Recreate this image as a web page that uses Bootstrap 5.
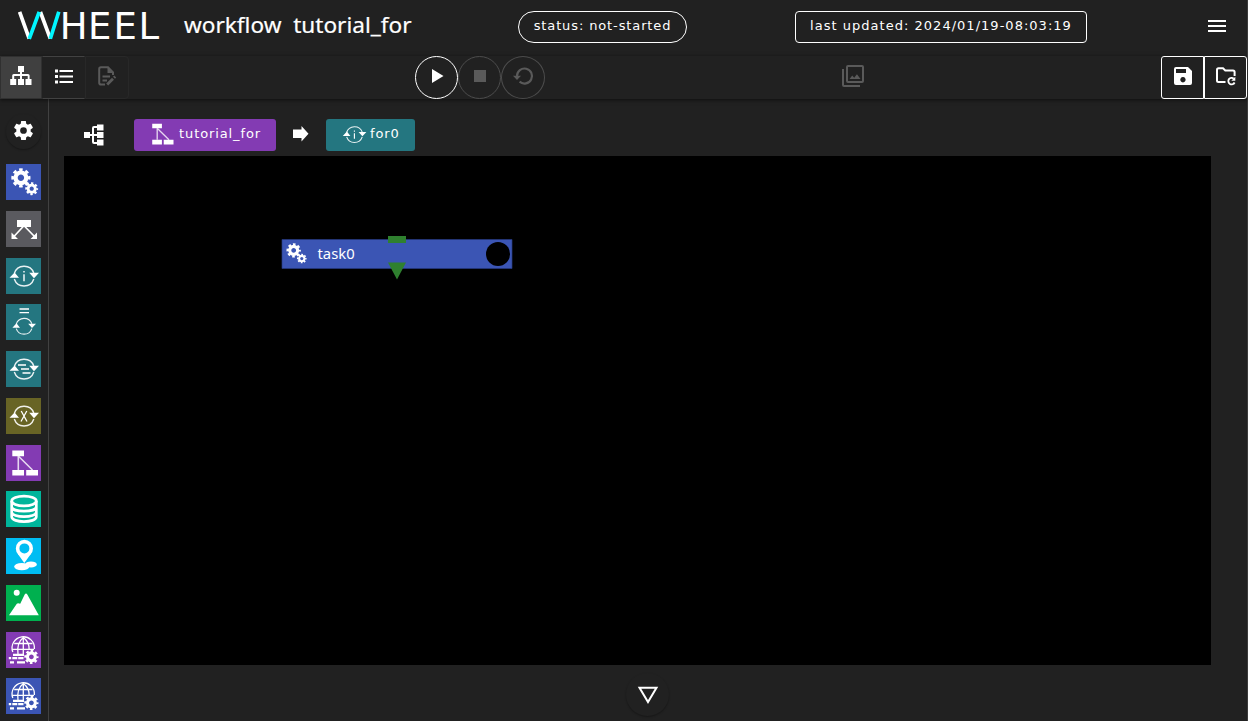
<!DOCTYPE html>
<html lang="en" data-bs-theme="dark">
<head>
<meta charset="utf-8">
<meta name="viewport" content="width=device-width, initial-scale=1">
<title>WHEEL workflow</title>
<link rel="stylesheet" href="https://cdn.jsdelivr.net/npm/bootstrap@5.3.0/dist/css/bootstrap.min.css">
<style>
body{background:#212121;color:#fff;font-family:"DejaVu Sans",sans-serif;font-size:13px;height:721px;overflow:hidden}
svg{display:block;flex:none;overflow:visible}
.app{height:721px;border-right:1px solid #3b3b3b}
.topbar{height:56px;padding-left:14px}
.title{font:22.6px/30px "Noto Sans",sans-serif;color:#fff;white-space:pre;margin:-6px 0 0 20px;width:227px;-webkit-text-stroke:.2px #fff}
.pill{height:32px;border:1px solid #fff;font-size:13px;line-height:28px;white-space:nowrap;text-align:center;margin-top:-2px}
.status{width:169px;border-radius:16px;margin-left:107px;letter-spacing:.88px}
.updated{width:292px;border-radius:4px;margin-left:108px;letter-spacing:1.02px}
.toolbar{height:43px;box-shadow:0 1px 4px #0009;position:relative}
.tool{height:43px;width:43px;border:1px solid #303030;padding:0;color:#fff;display:flex;align-items:center;justify-content:center;background:none;padding-bottom:3px}
.round-btn{border-radius:50%;border-color:#fff}
.dim{color:#5a5a5a;border-color:#4c4c4c}
.side{width:49px;border-right:1px solid #414141;padding:15px 0 0 6px}
.tile{width:35px;height:36px;margin-bottom:10.75px}
.gearbtn{width:35px;height:35px;border-radius:50%;margin-bottom:15px;box-shadow:0 1px 2px #0005;padding-bottom:3px}
.crumb{height:32px;border-radius:3px;font-size:13px;line-height:29px;color:#fff;letter-spacing:.9px}
.canvas{width:1147px;height:509px;background:#000;position:relative;margin-left:15px}
.node{position:absolute;left:217px;top:79px}
.down{width:43px;height:43px;border-radius:50%;box-shadow:0 1px 2px #0005;margin:8px 0 0 577px}
</style>
</head>
<body>
<svg width="0" height="0" class="position-absolute">
<defs>
<g id="gear"><circle r="5.3" fill="none" stroke="#fff" stroke-width="4.2"/><circle r="8" fill="none" stroke="#fff" stroke-width="3.2" pathLength="16" stroke-dasharray="1.1 .9" stroke-dashoffset=".55"/></g>
<g id="gears"><use href="#gear" transform="translate(14.9 13.8)"/><use href="#gear" transform="translate(25.7 24.7) scale(.67)"/></g>
<g id="loop"><path d="M8.3 15.5A10.3 10.3 0 0 1 27.8 15M8.3 21A10.3 10.3 0 0 0 27.8 21" fill="none" stroke="#fff" stroke-width="1.4" stroke-opacity=".9"/><path d="M3.5 19.8L8.6 14.4L13 19.8ZM23.2 14.8H33L28 20.2Z" fill="#fff"/></g>
<g id="info"><use href="#loop"/><path d="M18 13V14.6M18 16.3V23.2" stroke="#fff" stroke-width="1.4"/></g>
<g id="flow" fill="#fff"><path d="M6.3 5.6H18V11.2H6.3ZM6.3 25H18V30.6H6.3ZM20.2 25H32V30.6H20.2Z"/><path d="M12.3 11V25M12.3 11L26.5 25" stroke="#fff" stroke-width="1.6" opacity=".8"/></g>
<g id="globe"><g fill="none" stroke="#fff" stroke-width="1.3"><path d="M6.8 20A11.2 11.2 0 1 1 28.4 17"/><path d="M12 22Q10.5 11 17.3 5.5Q23.5 10 23.2 18M17.3 5.5V23M8.2 11.5H26.5M6.2 17.3H28"/></g><g stroke="#fff" stroke-width="2.2"><path d="M7 22.8H18M2.8 26.2H5.2M6.3 26.2H11.3M12.2 26.2H17.5M4 30.3H8M11 30.3H19"/></g><use href="#gear" transform="translate(25.4 24.8) scale(.74)"/></g>
</defs>
</svg>
<div class="app d-flex flex-column">
<header class="topbar d-flex align-items-center flex-shrink-0">
<svg width="150" height="56" viewBox="14 0 150 56"><g fill="none" stroke-width="3.7"><path d="M19.6 11.8L29.2 38.6M40.4 12L50.3 38.6" stroke="#fff"/><path d="M29.2 38.8L39.2 11.8M50.3 38.8L58.8 11.8" stroke="#00f6ff"/></g><text y="38.8" x="59.8 88 113.6 138.6" font-family="DejaVu Sans" font-size="37" fill="#fff">HEEL</text></svg>
<div class="title">workflow  tutorial_for</div>
<div class="pill status">status: not-started</div>
<div class="pill updated">last updated: 2024/01/19-08:03:19</div>
<svg width="18" height="12" viewBox="0 0 18 12" style="margin:-4px 0 0 121px"><path d="M0 1H18M0 6H18M0 11H18" stroke="#fff" stroke-width="2"/></svg>
</header>
<div class="toolbar d-flex flex-shrink-0">
<button class="tool" style="background:#404040;width:42px"><svg width="22" height="20" viewBox="0 0 22 20"><path d="M8 0H14V6H12V8H18Q19.6 8 19.6 9.6V13H21.5V19H15.5V13H17.7V10H12V13H14V19H8V13H10V10H4.2V13H6.2V19H.2V13H2.2V9.6Q2.2 8 3.8 8H10V6H8Z" fill="#fff"/></svg></button>
<button class="tool" style="border-color:#424242 transparent"><svg width="18" height="15" viewBox="0 0 18 15"><path d="M4.5 2H18M4.5 7.5H18M4.5 13H18" stroke="#fff" stroke-width="2.1"/><path d="M0 2H3M0 7.5H3M0 13H3" stroke="#fff" stroke-width="3"/></svg></button>
<button class="tool dim" style="border-color:#282828;border-radius:0 4px 4px 0;width:44px"><svg width="18" height="20" viewBox="0 0 18 20" fill="none" stroke="#5a5a5a" stroke-width="2"><path d="M7 18.5H3Q1.2 18.5 1.2 16.7V3Q1.2 1.2 3 1.2H10L15 6.5V9"/><path d="M9.5 1L15.5 7H9.5Z" fill="#5a5a5a" stroke="none"/><path d="M4.5 10.5H12M4.5 14.5H9"/><path d="M9.2 18.5L15 12.8M16 11.8L17.2 10.6" stroke-width="2.8"/></svg></button>
<div class="d-flex" style="margin-left:286px">
<button class="tool round-btn"><svg width="12" height="14" viewBox="0 0 12 14" style="margin-left:2px"><path d="M0 0L11.5 7L0 14Z" fill="#fff"/></svg></button>
<button class="tool round-btn dim"><svg width="12" height="12"><path d="M0 0H12V12H0Z" fill="#5a5a5a"/></svg></button>
<button class="tool round-btn dim" style="width:44px"><svg width="20" height="18" viewBox="0 0 20 18"><path d="M4 9A7.5 7.5 0 1 1 6.6 14.7" fill="none" stroke="#5a5a5a" stroke-width="2.2"/><path d="M0 8.7H8L4 13Z" fill="#5a5a5a"/></svg></button>
</div>
<svg width="24" height="24" viewBox="0 0 24 24" style="margin:8px 0 0 296px"><path fill="#5a5a5a" d="M21 17H7V3H21M21 1H7A2 2 0 0 0 5 3V17A2 2 0 0 0 7 19H21A2 2 0 0 0 23 17V3A2 2 0 0 0 21 1M3 5H1V21A2 2 0 0 0 3 23H19V21H3M15.96 10.29L13.21 13.83L11.25 11.47L8.5 15H19.5Z"/></svg>
<div class="d-flex ms-auto">
<button class="tool" style="border-color:#fff;border-radius:3px 0 0 3px"><svg width="18" height="18" viewBox="3 3 18 18"><path fill="#fff" fill-rule="evenodd" d="M17 3H5A2 2 0 0 0 3 5V19A2 2 0 0 0 5 21H19A2 2 0 0 0 21 19V7ZM5 5H15V9H5ZM12 13A2.7 2.7 0 1 1 11.9 13Z"/></svg></button>
<button class="tool" style="border-color:#fff;border-radius:0 3px 3px 0"><svg width="20" height="19" viewBox="0 0 20 19" fill="none" stroke="#fff" stroke-width="2"><path d="M9.5 15H2.5Q1 15 1 13.5V3Q1 1.3 2.5 1.3H7L9.3 3.5H17Q18.6 3.5 18.6 5V9"/><path d="M18.6 15.5A3.3 3.3 0 1 1 17.8 11.6" stroke-width="1.8"/><path d="M19.3 9.8V13.8H15.3Z" fill="#fff" stroke="none"/></svg></button>
</div>
</div>
<div class="d-flex flex-grow-1">
<aside class="side flex-shrink-0">
<div class="gearbtn d-flex align-items-center justify-content-center"><svg width="23" height="23" viewBox="0 0 24 24"><path fill="#fff" d="M12,15.5A3.5,3.5 0 0,1 8.5,12A3.5,3.5 0 0,1 12,8.5A3.5,3.5 0 0,1 15.5,12A3.5,3.5 0 0,1 12,15.5M19.43,12.97C19.47,12.65 19.5,12.33 19.5,12C19.5,11.67 19.47,11.34 19.43,11L21.54,9.37C21.73,9.22 21.78,8.95 21.66,8.73L19.66,5.27C19.54,5.05 19.27,4.96 19.05,5.05L16.56,6.05C16.04,5.66 15.5,5.32 14.87,5.07L14.5,2.42C14.46,2.18 14.25,2 14,2H10C9.75,2 9.54,2.18 9.5,2.42L9.13,5.07C8.5,5.32 7.96,5.66 7.44,6.05L4.95,5.05C4.73,4.96 4.46,5.05 4.34,5.27L2.34,8.73C2.21,8.95 2.27,9.22 2.46,9.37L4.57,11C4.53,11.34 4.5,11.67 4.5,12C4.5,12.33 4.53,12.65 4.57,12.97L2.46,14.63C2.27,14.78 2.21,15.05 2.34,15.27L4.34,18.73C4.46,18.95 4.73,19.03 4.95,18.95L7.44,17.94C7.96,18.34 8.5,18.68 9.13,18.93L9.5,21.58C9.54,21.82 9.75,22 10,22H14C14.25,22 14.46,21.82 14.5,21.58L14.87,18.93C15.5,18.67 16.04,18.34 16.56,17.94L19.05,18.95C19.27,19.03 19.54,18.95 19.66,18.73L21.66,15.27C21.78,15.05 21.73,14.78 21.54,14.63L19.43,12.97Z"/></svg></div>
<svg class="tile" style="background:#3b55b4" viewBox="0 0 35 36"><use href="#gears"/></svg>
<svg class="tile" style="background:#5a5a5f" viewBox="0 0 35 36"><path d="M11 9H25V16H11ZM5.5 28V21.5L12 28ZM31 28V21.5L24.5 28Z" fill="#fff"/><path d="M17.7 15L7 26.5M18.3 15L29.5 26.5" stroke="#fff" stroke-width="1.7"/></svg>
<svg class="tile" style="background:#247680" viewBox="0 0 35 36"><use href="#info"/></svg>
<svg class="tile" style="background:#247680" viewBox="0 0 35 36"><path d="M13.5 5H23M13.5 8.6H23" stroke="#fff" stroke-width="1.4"/><use href="#loop" transform="translate(3.6 7.8) scale(.8)"/></svg>
<svg class="tile" style="background:#247680" viewBox="0 0 35 36"><use href="#loop"/><path d="M12 14H20M15 18H23M16.5 22H24.5" stroke="#fff" stroke-width="1.5"/></svg>
<svg class="tile" style="background:#686425" viewBox="0 0 35 36"><use href="#loop"/><path d="M15.2 13L21 23.5M20.8 13L15 23.5" stroke="#fff" stroke-width="1.3"/></svg>
<svg class="tile" style="background:#833bb3" viewBox="0 0 35 36"><use href="#flow"/></svg>
<svg class="tile" style="background:#00b59b" viewBox="0 0 35 36"><g fill="none" stroke="#fff" stroke-width="2.7"><ellipse cx="18" cy="10" rx="12.3" ry="4.8"/><path d="M5.7 10V25.7C5.7 32.2 30.3 32.2 30.3 25.7V10M5.7 15.7C5.7 21.7 30.3 21.7 30.3 15.7M5.7 21C5.7 27.2 30.3 27.2 30.3 21"/></g></svg>
<svg class="tile" style="background:#00bdf3" viewBox="0 0 35 36"><ellipse cx="15.8" cy="28.6" rx="7.6" ry="3.6" fill="#fff"/><ellipse cx="25" cy="26.4" rx="5.8" ry="3" fill="#fff"/><path d="M18.3 25L11.5 15.5H25.2Z" fill="#fff"/><circle cx="18.4" cy="10.4" r="6.8" fill="#00bdf3" stroke="#fff" stroke-width="3.6"/></svg>
<svg class="tile" style="background:#00b04f" viewBox="0 0 35 36"><circle cx="10.7" cy="7.8" r="3" fill="#fff"/><path d="M3 30.3L10.8 18.7Q11.8 17.7 14.2 18.7L18.7 9.5Q20 7.5 21.3 9.5L32.8 30.3Z" fill="#fff"/></svg>
<svg class="tile" style="background:#833bb3" viewBox="0 0 35 36"><use href="#globe"/></svg>
<svg class="tile mb-0" style="background:#3b55b4" viewBox="0 0 35 36"><use href="#globe"/></svg>
</aside>
<main class="flex-grow-1">
<div class="d-flex align-items-center" style="height:32px;margin:20px 0 5px 35px">
<svg width="20" height="22" viewBox="0 0 20 22"><path fill="#fff" d="M0 8H6V10H8V4Q8 2 10 2H13V.5H19.5V6.5H13V4H10V10H13V8H19.5V14H13V12H10V18H13V15.5H19.5V21.5H13V20H10Q8 20 8 18V12H6V14H0Z"/></svg>
<div class="crumb d-flex" style="background:#833bb3;width:142px;margin-left:30px;padding-left:13px"><svg width="29" height="30" viewBox="0 0 35 36" style="margin:0 3px 0 0"><use href="#flow"/></svg>tutorial_for</div>
<svg width="16" height="16" viewBox="0 0 16 16" style="margin:-2px 0 0 17px"><path d="M0 3.5H8.5V0L15.5 7.8L8.5 15.5V12H0Z" fill="#fff"/></svg>
<div class="crumb d-flex" style="background:#247680;width:89px;margin-left:17px;padding-left:14px"><svg width="28" height="29" viewBox="0 0 35 36" style="margin:1px 2px 0 0"><use href="#info"/></svg>for0</div>
</div>
<div class="canvas">
<svg class="node" width="232" height="46" viewBox="281 235 232 46"><path d="M282 239.5H512V268.5H282Z" fill="#3b55b4" stroke="#263a80" stroke-width=".7"/><path d="M388 236H406V243H388ZM388 262.5H406L397 279.5Z" fill="#2f802f"/><use href="#gears" transform="translate(282.5 240) scale(.75)"/><circle cx="498" cy="254" r="12"/><text x="317.5" y="259" font-family="Noto Sans" font-size="14.8" fill="#fff">task0</text></svg>
</div>
<div class="down d-flex justify-content-center"><svg width="22" height="19" viewBox="0 0 22 19" style="margin-top:13px"><path d="M2.5 1.7H19.5L11 16Z" fill="none" stroke="#fff" stroke-width="2"/></svg></div>
</main>
</div>
</div>
<script src="https://cdn.jsdelivr.net/npm/bootstrap@5.3.0/dist/js/bootstrap.bundle.min.js"></script>
</body>
</html>
